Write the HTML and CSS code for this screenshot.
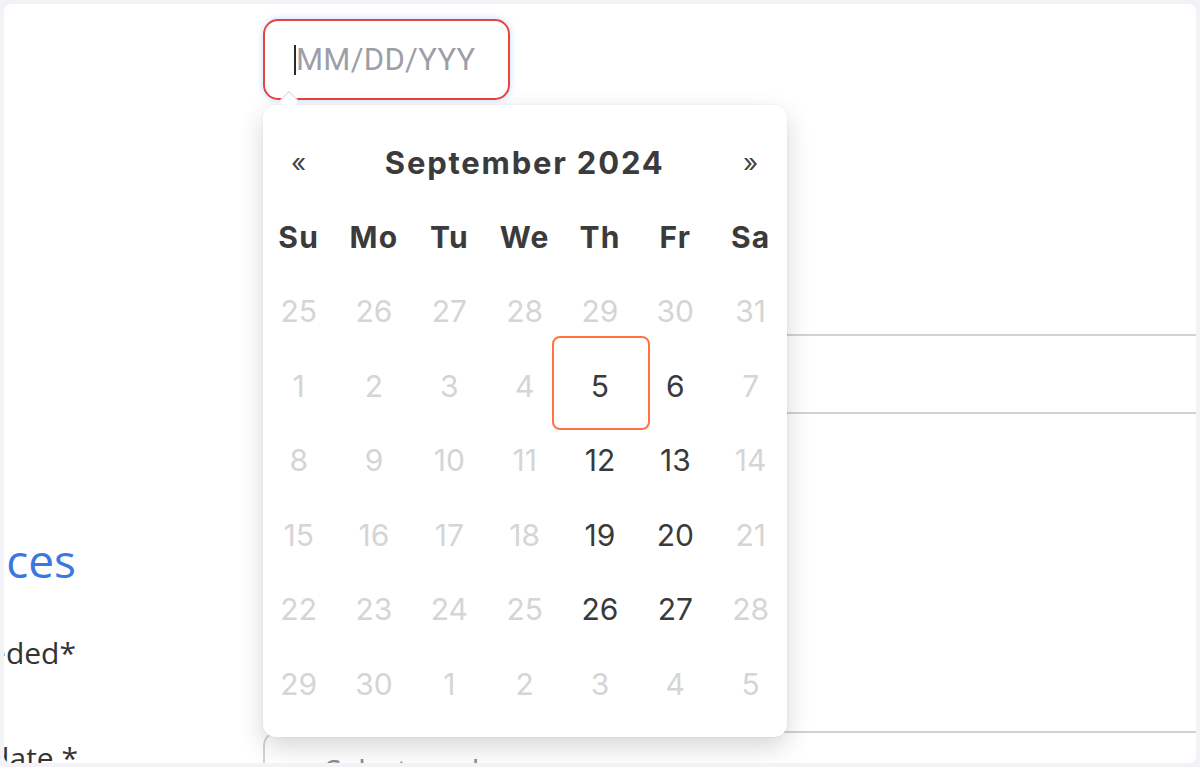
FILE: index.html
```html
<!DOCTYPE html>
<html lang="en">
<head>
<meta charset="utf-8">
<title>Date picker</title>
<link rel="stylesheet" href="styles.css">
</head>
<body>
<div class="frame">
  <div class="form">
    <div class="row row-date">
      <div class="label"></div>
      <div class="field date-field">
        <div class="date-input">
          <span class="caret"></span><span class="placeholder">MM/DD/YYY</span>
        </div>
        <div class="pointer"></div>
        <div class="popup">
          <div class="cal-grid cal-head">
            <span class="nav">&laquo;</span>
            <span class="title">September 2024</span>
            <span class="nav">&raquo;</span>
          </div>
          <div class="cal-grid cal-week">
            <span>Su</span><span>Mo</span><span>Tu</span><span>We</span><span>Th</span><span>Fr</span><span>Sa</span>
          </div>
          <div class="cal-grid cal-days">
            <span class="off">25</span><span class="off">26</span><span class="off">27</span><span class="off">28</span><span class="off">29</span><span class="off">30</span><span class="off">31</span>
            <span class="off">1</span><span class="off">2</span><span class="off">3</span><span class="off">4</span><span class="on focus">5</span><span class="on">6</span><span class="off">7</span>
            <span class="off">8</span><span class="off">9</span><span class="off">10</span><span class="off">11</span><span class="on">12</span><span class="on">13</span><span class="off">14</span>
            <span class="off">15</span><span class="off">16</span><span class="off">17</span><span class="off">18</span><span class="on">19</span><span class="on">20</span><span class="off">21</span>
            <span class="off">22</span><span class="off">23</span><span class="off">24</span><span class="off">25</span><span class="on">26</span><span class="on">27</span><span class="off">28</span>
            <span class="off">29</span><span class="off">30</span><span class="off">1</span><span class="off">2</span><span class="off">3</span><span class="off">4</span><span class="off">5</span>
          </div>
        </div>
      </div>
    </div>

    <div class="row row-notes">
      <div class="label">Additional notes</div>
      <div class="field"><div class="textbox"></div></div>
    </div>

    <div class="section-title">Services</div>

    <div class="row row-needed">
      <div class="label">Funds needed*</div>
      <div class="field"></div>
    </div>

    <div class="row row-start">
      <div class="label start-label">Start date *</div>
      <div class="field"><div class="select-box">Select a value</div></div>
    </div>
  </div>
</div>
</body>
</html>
```

FILE: styles.css
```css
html, body {
  margin: 0;
  padding: 0;
}
body {
  background: #f3f2f7;
  width: 1200px;
  height: 767px;
  overflow: hidden;
  font-family: "Open Sans", "Liberation Sans", sans-serif;
}
.frame {
  margin: 4px;
  width: 1192px;
  height: 759px;
  background: #ffffff;
  border-radius: 7px;
  overflow: hidden;
  position: relative;
}
.form {
  margin-left: -200px;
  padding-top: 15px;
}
.row {
  display: grid;
  grid-template-columns: 272px 1000px;
  column-gap: 187px;
}
.label {
  text-align: right;
  white-space: nowrap;
  font-size: 30px;
  line-height: 40px;
  color: #333333;
}
.row-date .label { visibility: hidden; }
.row-notes .label { visibility: hidden; }
.field { position: relative; }

/* date input */
.date-input {
  box-sizing: border-box;
  width: 247px;
  height: 81px;
  border: 2px solid #e8433f;
  border-radius: 15px;
  box-shadow: 0 0 7px rgba(120, 180, 255, 0.45);
  display: flex;
  align-items: center;
  padding-left: 29px;
}
.caret {
  width: 2px;
  height: 30px;
  background: #2b2b2b;
  margin-right: 0;
}
.placeholder {
  font-family: Roboto, "Liberation Sans", sans-serif;
  font-size: 31px;
  color: #9d9fa8;
  letter-spacing: 0.3px;
}
.pointer {
  position: absolute;
  left: 19px;
  top: 75px;
  width: 13px;
  height: 13px;
  background: #ffffff;
  border-top: 1px solid #dcdcdc;
  border-left: 1px solid #dcdcdc;
  transform: rotate(45deg);
  z-index: 3;
}

/* popup */
.popup {
  position: absolute;
  left: 0;
  top: 86px;
  width: 524px;
  height: 632px;
  box-sizing: border-box;
  padding: 20px 0 16px;
  background: #ffffff;
  border-radius: 13px;
  box-shadow: 0 10px 26px rgba(0, 0, 0, 0.16), 0 0 3px rgba(0, 0, 0, 0.06);
  z-index: 2;
  font-family: Inter, "Open Sans", sans-serif;
  color: #3b3b3b;
}
.cal-grid {
  display: grid;
  grid-template-columns: repeat(7, 75.33px);
  margin-left: -2px;
  grid-auto-rows: 74.5px;
  align-items: center;
  justify-items: center;
}
.cal-head .title {
  grid-column: 2 / 7;
  font-size: 31px;
  font-weight: 700;
  letter-spacing: 1.8px;
}
.cal-head .nav {
  font-size: 26px;
  font-weight: 400;
  color: #444444;
}
.cal-week span {
  font-size: 30px;
  font-weight: 700;
  letter-spacing: 1.2px;
}
.cal-days span {
  align-self: stretch;
  justify-self: stretch;
  display: flex;
  align-items: center;
  justify-content: center;
  font-size: 30px;
  font-weight: 400;
  position: relative;
}
.cal-days .off { color: #d5d5d5; }
.cal-days .on { color: #3a3a3a; }
.cal-days span.focus::after {
  content: "";
  position: absolute;
  left: -10px;
  right: -12px;
  top: -13px;
  bottom: -7px;
  border: 2.5px solid #ff7342;
  border-radius: 8px;
}

/* notes box */
.row-notes { margin-top: 234px; }
.textbox {
  box-sizing: border-box;
  height: 80px;
  border: 2px solid #d2d2d2;
  border-radius: 14px;
}

/* section */
.section-title {
  width: 272px;
  text-align: right;
  white-space: nowrap;
  margin-top: 118px;
  font-size: 46px;
  line-height: 56px;
  font-weight: 500;
  color: #3a78e0;
}
.row-needed { margin-top: 45px; }
.row-start { margin-top: 58px; }
.start-label {
  padding-top: 7px;
  margin-right: -2px;
}
.select-box {
  box-sizing: border-box;
  height: 90px;
  border: 2px solid #d2d2d2;
  border-radius: 15px;
  padding: 16px 0 0 60px;
  font-size: 30px;
  color: #8a8a8a;
}
```
